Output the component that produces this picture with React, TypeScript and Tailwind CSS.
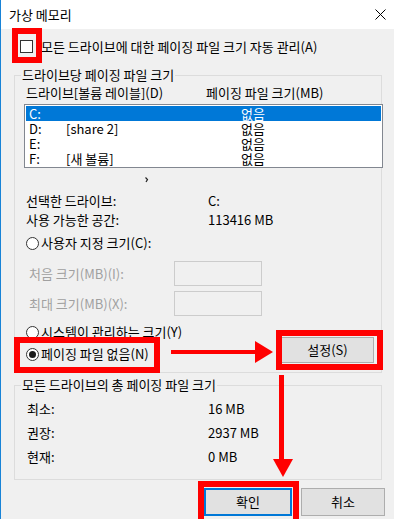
import React from "react";

const drives = [
  { id: "C:", label: "", size: "없음", selected: true },
  { id: "D:", label: "[share 2]", size: "없음", selected: false },
  { id: "E:", label: "", size: "없음", selected: false },
  { id: "F:", label: "[새 볼륨]", size: "없음", selected: false },
];

const totals = [
  { name: "최소:", value: "16 MB" },
  { name: "권장:", value: "2937 MB" },
  { name: "현재:", value: "0 MB" },
];

const Radio = ({ checked }: { checked?: boolean }) => (
  <span className="w-[13px] h-[13px] rounded-full border border-[#333] bg-white flex items-center justify-center shrink-0">
    {checked && <span className="w-[7px] h-[7px] rounded-full bg-[#1a1a1a]" />}
  </span>
);

const GroupTitle = ({ children }: { children: React.ReactNode }) => (
  <span className="absolute -top-[9px] left-[6px] px-[1px] bg-[#f0f0f0] leading-[16px] whitespace-nowrap">{children}</span>
);

const App = () => {
  return (
    <div className="relative w-[394px] h-[519px] overflow-hidden bg-[#f0f0f0] border-l border-[#1883d7] text-[13px] leading-[16px] text-black font-['Noto_Sans_CJK_KR','Noto_Sans',sans-serif]">
      {/* title bar */}
      <div className="h-[29px] bg-white flex items-center justify-between pl-[8px] pr-[8px]">
        <span>가상 메모리</span>
        <svg width="11" height="11" viewBox="0 0 11 11">
          <path d="M0.5 0.5 L10.5 10.5 M10.5 0.5 L0.5 10.5" stroke="#000" strokeWidth="1" />
        </svg>
      </div>

      {/* auto manage */}
      <div className="mt-[11px] h-[13px] pl-[19px] flex items-center gap-[8px]">
        <span className="w-[13px] h-[13px] border border-[#333] bg-white shrink-0" />
        <span className="whitespace-nowrap">모든 드라이브에 대한 페이징 파일 크기 자동 관리(A)</span>
      </div>

      {/* per drive group */}
      <div className="relative mt-[22px] ml-[13px] w-[368px] h-[298px] border border-[#dcdcdc]">
        <GroupTitle>드라이브당 페이징 파일 크기</GroupTitle>

        <div className="mt-[9px] pl-[11px] flex h-[16px] whitespace-nowrap">
          <span className="w-[180px] shrink-0">드라이브[볼륨 레이블](D)</span>
          <span>페이징 파일 크기(MB)</span>
        </div>

        <div className="mt-[3px] ml-[9px] w-[359px] h-[64px] border border-[#828790] bg-white p-[1px]">
          {drives.map((d) => (
            <div
              key={d.id}
              className={`h-[15px] leading-[15px] flex items-center pl-[3px] ${d.selected ? "bg-[#0078d7] text-white" : ""}`}
            >
              <span className="w-[37px] shrink-0">{d.id}</span>
              <span className="w-[175px] shrink-0">{d.label}</span>
              <span>{d.size}</span>
            </div>
          ))}
        </div>

        <div className="h-[25px] pl-[130px] pt-[9px]">
          <svg width="4" height="6" viewBox="0 0 4 6">
            <path d="M0.5 0.5 L2.5 2.5 L1 5" stroke="#222" strokeWidth="1.2" fill="none" />
          </svg>
        </div>

        <div className="pl-[11px] flex h-[16px]">
          <span className="w-[182px] shrink-0">선택한 드라이브:</span>
          <span>C:</span>
        </div>
        <div className="mt-[3px] pl-[11px] flex h-[16px]">
          <span className="w-[182px] shrink-0">사용 가능한 공간:</span>
          <span>113416 MB</span>
        </div>

        <div className="mt-[7px] pl-[11px] flex items-center gap-[2px] h-[16px]">
          <Radio />
          <span>사용자 지정 크기(C):</span>
        </div>

        <div className="mt-[10px] pl-[14px] flex items-center text-[#a0a0a0]">
          <span className="w-[145px] shrink-0">처음 크기(MB)(I):</span>
          <span className="w-[88px] h-[25px] border border-[#cccccc] bg-[#f0f0f0]" />
        </div>
        <div className="mt-[5px] pl-[14px] flex items-center text-[#a0a0a0]">
          <span className="w-[145px] shrink-0">최대 크기(MB)(X):</span>
          <span className="w-[88px] h-[25px] border border-[#cccccc] bg-[#f0f0f0]" />
        </div>

        <div className="flex justify-between items-end pr-[7px]">
          <div className="pl-[11px] pb-[1px]">
            <div className="mt-[8px] flex items-center gap-[2px] h-[16px] whitespace-nowrap">
              <Radio />
              <span>시스템이 관리하는 크기(Y)</span>
            </div>
            <div className="mt-[6px] flex items-center gap-[2px] h-[16px] whitespace-nowrap">
              <Radio checked />
              <span>페이징 파일 없음(N)</span>
            </div>
          </div>
          <button className="w-[93px] h-[26px] bg-[#e1e1e1] border border-[#adadad] text-black">설정(S)</button>
        </div>
      </div>

      {/* totals group */}
      <div className="relative mt-[12px] ml-[13px] w-[368px] h-[95px] border border-[#dcdcdc]">
        <GroupTitle>모든 드라이브의 총 페이징 파일 크기</GroupTitle>
        <div className="pt-[15px] pl-[12px] flex flex-col gap-[8px]">
          {totals.map((t) => (
            <div key={t.name} className="flex h-[16px]">
              <span className="w-[181px] shrink-0">{t.name}</span>
              <span>{t.value}</span>
            </div>
          ))}
        </div>
      </div>

      {/* dialog buttons */}
      <div className="mt-[8px] pr-[9px] flex justify-end gap-[9px]">
        <button className="w-[88px] h-[28px] bg-[#e1e1e1] border-2 border-[#0078d7]">확인</button>
        <button className="w-[84px] h-[28px] bg-[#e1e1e1] border border-[#adadad]">취소</button>
      </div>

      {/* red annotations */}
      <div className="absolute left-[11px] top-[28px] w-[30px] h-[35px] border-[6px] border-[#ff0000]" />
      <div className="absolute left-[13px] top-[337px] w-[146px] h-[36px] border-[6px] border-[#ff0000]" />
      <div className="absolute left-[275px] top-[330px] w-[107px] h-[40px] border-[6px] border-[#ff0000]" />
      <div className="absolute left-[197px] top-[481px] w-[101px] h-[45px] border-[6px] border-[#ff0000]" />
      <svg className="absolute left-[170px] top-[341px]" width="103" height="23" viewBox="0 0 103 23">
        <rect x="0" y="9" width="86" height="4" fill="#ff0000" />
        <polygon points="84,0 102,11 84,22" fill="#ff0000" />
      </svg>
      <svg className="absolute left-[272px] top-[375px]" width="21" height="103" viewBox="0 0 21 103">
        <rect x="6" y="0" width="5" height="86" fill="#ff0000" />
        <polygon points="0,84 20,84 10,102" fill="#ff0000" />
      </svg>
    </div>
  );
};

export default App;
